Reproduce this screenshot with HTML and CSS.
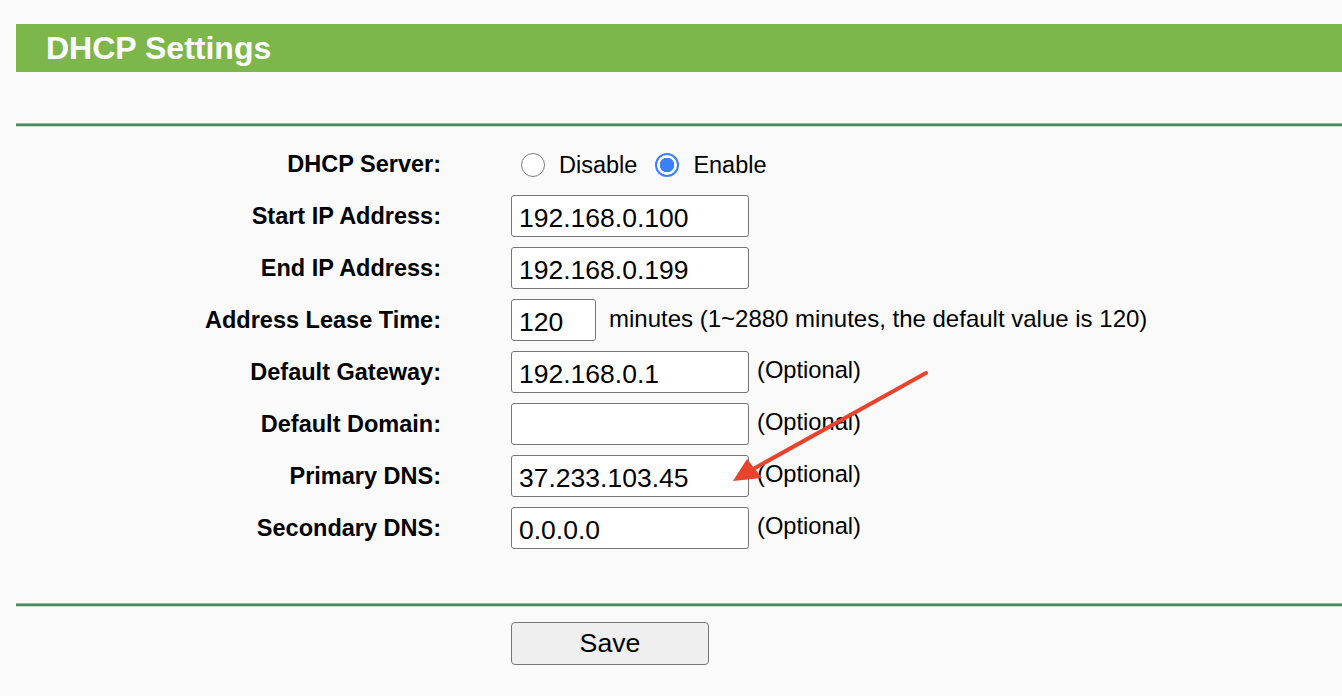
FILE: index.html
```html
<!DOCTYPE html>
<html>
<head>
<meta charset="utf-8">
<link rel="stylesheet" href="styles.css">
</head>
<body>
<div class="page">
  <div class="titlebar"><h1 class="title">DHCP Settings</h1></div>
  <div class="rule top-rule"></div>
  <form class="form">
    <div class="row">
      <div class="label">DHCP Server:</div>
      <div class="field radios">
        <label class="radio"><input type="radio" name="dhcp" class="radio-input"><span>Disable</span></label>
        <label class="radio"><input type="radio" name="dhcp" class="radio-input" checked><span>Enable</span></label>
      </div>
    </div>
    <div class="row">
      <div class="label">Start IP Address:</div>
      <div class="field"><input class="text" type="text" value="192.168.0.100"></div>
    </div>
    <div class="row">
      <div class="label">End IP Address:</div>
      <div class="field"><input class="text" type="text" value="192.168.0.199"></div>
    </div>
    <div class="row">
      <div class="label">Address Lease Time:</div>
      <div class="field"><input class="text short" type="text" value="120"><span class="note note-wide">minutes (1~2880 minutes, the default value is 120)</span></div>
    </div>
    <div class="row">
      <div class="label">Default Gateway:</div>
      <div class="field"><input class="text" type="text" value="192.168.0.1"><span class="note">(Optional)</span></div>
    </div>
    <div class="row">
      <div class="label">Default Domain:</div>
      <div class="field"><input class="text" type="text" value=""><span class="note">(Optional)</span></div>
    </div>
    <div class="row">
      <div class="label">Primary DNS:</div>
      <div class="field"><input class="text" type="text" value="37.233.103.45"><span class="note">(Optional)</span></div>
    </div>
    <div class="row">
      <div class="label">Secondary DNS:</div>
      <div class="field"><input class="text" type="text" value="0.0.0.0"><span class="note">(Optional)</span></div>
    </div>
  </form>
  <div class="rule bottom-rule"></div>
  <div class="actions"><button class="save" type="button">Save</button></div>
</div>
<svg class="arrow" width="210" height="125" viewBox="0 0 210 125">
  <line x1="201" y1="8" x2="30" y2="103" stroke="#e8442d" stroke-width="4" stroke-linecap="round"/>
  <polygon points="8,116 22,94 37,113" fill="#e8442d"/>
</svg>
</body>
</html>
```
FILE: styles.css
```css
html, body {
  margin: 0;
  padding: 0;
  background: #fafafa;
}
body {
  font-family: "Liberation Sans", Arial, sans-serif;
  color: #000;
  position: relative;
  width: 1342px;
  height: 696px;
  overflow: hidden;
}
.page {
  padding-top: 24px;
  padding-left: 16px;
}
.titlebar {
  background: #7db74b;
  height: 48px;
  display: flex;
  align-items: center;
  padding-left: 30px;
}
.title {
  margin: 0;
  color: #fff;
  font-size: 32px;
  font-weight: bold;
  line-height: 1;
}
.rule {
  height: 2px;
  background: #4d8a5c;
  border-top: 1px solid #93b79c;
  border-bottom: 1px solid #c9ddcc;
}
.top-rule {
  margin-top: 51px;
}
.form {
  margin: 16px 0 0 0;
  padding-bottom: 1px;
}
.row {
  display: flex;
  align-items: center;
  height: 42px;
  margin-bottom: 10px;
}
.row:last-child {
  margin-bottom: 0;
}
.label {
  width: 425px;
  margin-right: 70px;
  text-align: right;
  font-weight: bold;
  font-size: 23.5px;
  white-space: nowrap;
}
.field {
  display: flex;
  align-items: center;
}
.radios {
  padding-left: 10px;
  padding-top: 2px;
}
.radio {
  display: flex;
  align-items: center;
  font-size: 23.5px;
  margin-right: 18px;
}
.radio-input {
  appearance: none;
  -webkit-appearance: none;
  width: 24px;
  height: 24px;
  margin: 0 14px 0 0;
  border: 1.5px solid #7a7a7a;
  border-radius: 50%;
  background: #fff;
  box-sizing: border-box;
}
.radio-input:checked {
  border: 2px solid #3a80f6;
  background: radial-gradient(circle, #3a80f6 0 7px, #fff 7.5px);
}
.text {
  box-sizing: border-box;
  width: 238px;
  height: 42px;
  border: 1.5px solid #767676;
  border-radius: 3px;
  background: #fff;
  font-family: "Liberation Sans", Arial, sans-serif;
  font-size: 26.5px;
  color: #000;
  padding: 4px 0 0 7px;
  margin: 0;
  outline: none;
}
.short {
  width: 85px;
}
.note {
  font-size: 23.7px;
  margin-left: 8px;
  margin-top: -4px;
  white-space: nowrap;
}
.note-wide {
  margin-left: 13px;
  font-size: 24px;
  margin-top: -3px;
}
.bottom-rule {
  margin-top: 53px;
}
.actions {
  padding-left: 495px;
  padding-top: 15px;
}
.save {
  width: 198px;
  height: 43px;
  background: #efefef;
  border: 1.5px solid #767676;
  border-radius: 4px;
  font-family: "Liberation Sans", Arial, sans-serif;
  font-size: 26.7px;
  color: #000;
  padding: 0;
}
.arrow {
  position: absolute;
  left: 725px;
  top: 365px;
}
```
